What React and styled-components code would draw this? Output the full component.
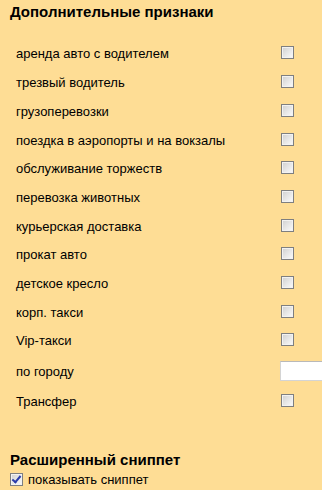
import React from "react";
import styled, { createGlobalStyle } from "styled-components";

const Global = createGlobalStyle`
  html, body { margin: 0; padding: 0; overflow: hidden; background: #fedd95; }
  body { font-family: "Liberation Sans", Arial, sans-serif; color: #000; }
`;

const Page = styled.div`
  width: 322px;
  height: 490px;
  background: #fedd95;
  overflow: hidden;
  padding-top: 3px;
  box-sizing: border-box;
`;

const Heading = styled.h2`
  margin: 0;
  padding-left: 10px;
  font-size: 15px;
  line-height: 17px;
  font-weight: bold;
`;

const List = styled.div`
  display: grid;
  grid-template-columns: 265px auto;
  padding-left: 16px;
  margin-top: 18.6px;
`;

const Label = styled.div`
  display: flex;
  align-items: center;
  height: ${(p) => p.$h}px;
  font-size: 13px;
  line-height: 15px;
  padding-top: 2px;
  box-sizing: border-box;
`;

const Control = styled.div`
  display: flex;
  align-items: center;
  height: ${(p) => p.$h}px;
  padding-top: ${(p) => p.$pt || 0}px;
  box-sizing: border-box;
`;

const Box = styled.input.attrs({ type: "checkbox" })`
  appearance: none;
  -webkit-appearance: none;
  margin: 0;
  width: 13px;
  height: 13px;
  box-sizing: border-box;
  border: 1px solid #7e7f80;
  background: linear-gradient(135deg, #cfcfcf 0%, #e6e6e6 50%, #fbfbfb 100%);
  box-shadow: inset 0 0 0 1px #f2f2f2;
  position: relative;
  flex: none;
  &:checked::after {
    content: "";
    position: absolute;
    left: 3px;
    top: 0px;
    width: 3px;
    height: 7px;
    border-right: 2px solid #2a3caa;
    border-bottom: 2px solid #2a3caa;
    transform: rotate(40deg);
  }
`;

const TextInput = styled.input.attrs({ type: "text" })`
  margin: 0 0 0 -1px;
  width: 160px;
  height: 20px;
  box-sizing: border-box;
  border: 1px solid #d4d4d4;
  border-top-color: #b9b9b9;
  background: #fff;
  padding: 0;
  outline: none;
`;

const Heading2 = styled(Heading)`
  margin-top: 36px;
`;

const SnippetRow = styled.label`
  display: flex;
  align-items: center;
  gap: 5px;
  padding-left: 10px;
  margin-top: 4px;
  font-size: 13px;
  line-height: 15px;
`;

const items = [
  "аренда авто с водителем",
  "трезвый водитель",
  "грузоперевозки",
  "поездка в аэропорты и на вокзалы",
  "обслуживание торжеств",
  "перевозка животных",
  "курьерская доставка",
  "прокат авто",
  "детское кресло",
  "корп. такси",
  "Vip-такси",
];

export default function App() {
  const H = 28.7;
  return (
    <Page>
      <Global />
      <Heading>Дополнительные признаки</Heading>
      <List>
        {items.map((t) => (
          <React.Fragment key={t}>
            <Label $h={H}>{t}</Label>
            <Control $h={H}>
              <Box />
            </Control>
          </React.Fragment>
        ))}
        <Label $h={32}>по городу</Label>
        <Control $h={32} $pt={2}>
          <TextInput />
        </Control>
        <Label $h={H}>Трансфер</Label>
        <Control $h={H}>
          <Box />
        </Control>
      </List>
      <Heading2>Расширенный сниппет</Heading2>
      <SnippetRow>
        <Box defaultChecked />
        показывать сниппет
      </SnippetRow>
    </Page>
  );
}
